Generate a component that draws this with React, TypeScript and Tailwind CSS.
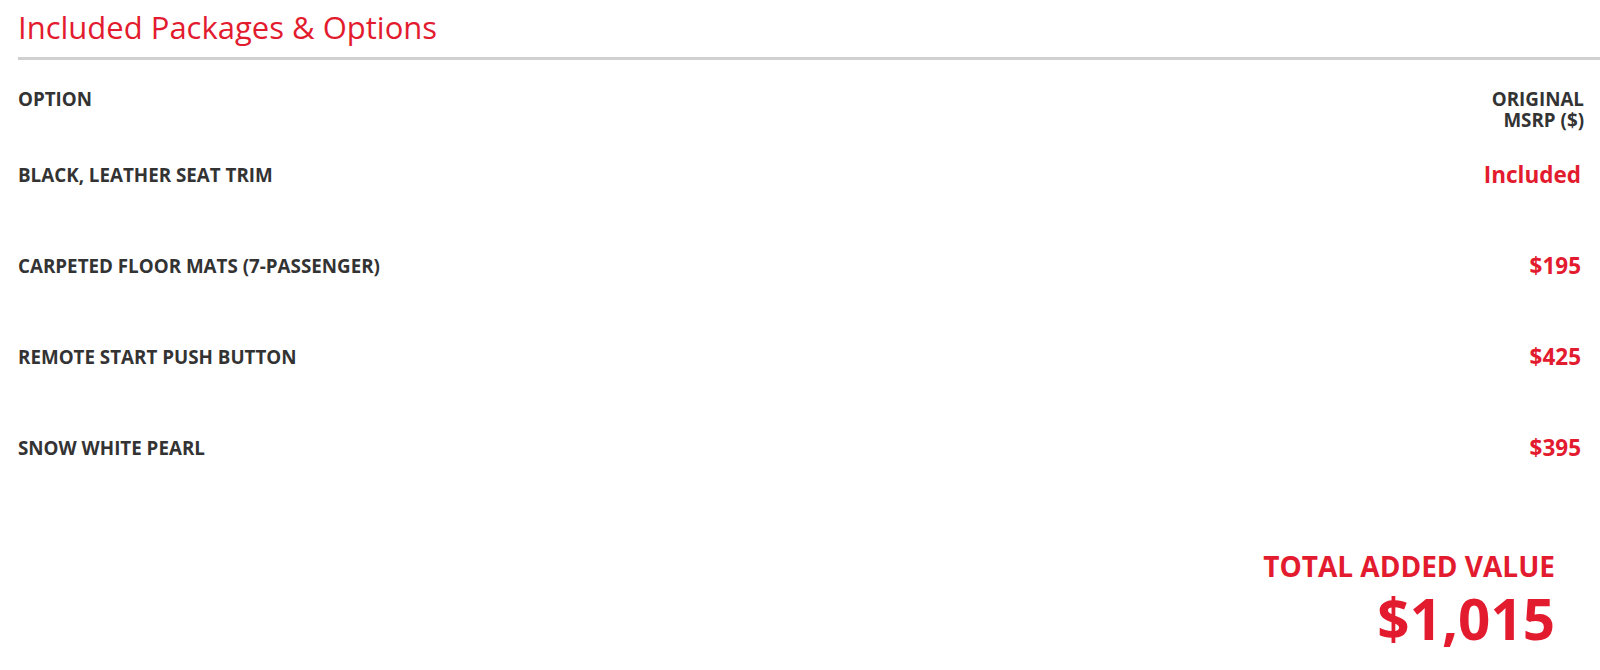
const rows = [
  { name: "BLACK, LEATHER SEAT TRIM", price: "Included" },
  { name: "CARPETED FLOOR MATS (7-PASSENGER)", price: "$195" },
  { name: "REMOTE START PUSH BUTTON", price: "$425" },
  { name: "SNOW WHITE PEARL", price: "$395" },
];

export default function App() {
  return (
    <div className="h-[670px] w-full overflow-hidden bg-white pl-[18px] font-['Open_Sans',sans-serif]">
      {/* Heading */}
      <h2 className="border-b-[3px] border-[#d0d0d0] pt-[6px] pb-[9px] text-[31px] leading-[42px] font-normal text-[#e31b2f]">
        Included Packages & Options
      </h2>

      {/* Table */}
      <div className="pr-[16px]">
        <div className="flex items-start justify-between pt-[29px] text-[18.8px] leading-[21px] font-bold text-[#333333]">
          <span>OPTION</span>
          <span className="text-right">
            ORIGINAL
            <br />
            MSRP ($)
          </span>
        </div>
        {rows.map((r) => (
          <div key={r.name} className="flex h-[91px] items-start justify-between pt-[32px]">
            <span className="text-[18.8px] leading-[24px] font-bold text-[#333333]">{r.name}</span>
            <span className="pr-[3px] text-[22.5px] leading-[24px] font-bold text-[#e31b2f]">{r.price}</span>
          </div>
        ))}
      </div>

      {/* Total */}
      <div className="flex flex-col items-end pr-[45px] pt-[53px] text-[#e31b2f]">
        <span className="text-[28px] leading-[36px] font-bold">TOTAL ADDED VALUE</span>
        <span className="text-[56.5px] leading-[70px] font-bold">$1,015</span>
      </div>
    </div>
  );
}
